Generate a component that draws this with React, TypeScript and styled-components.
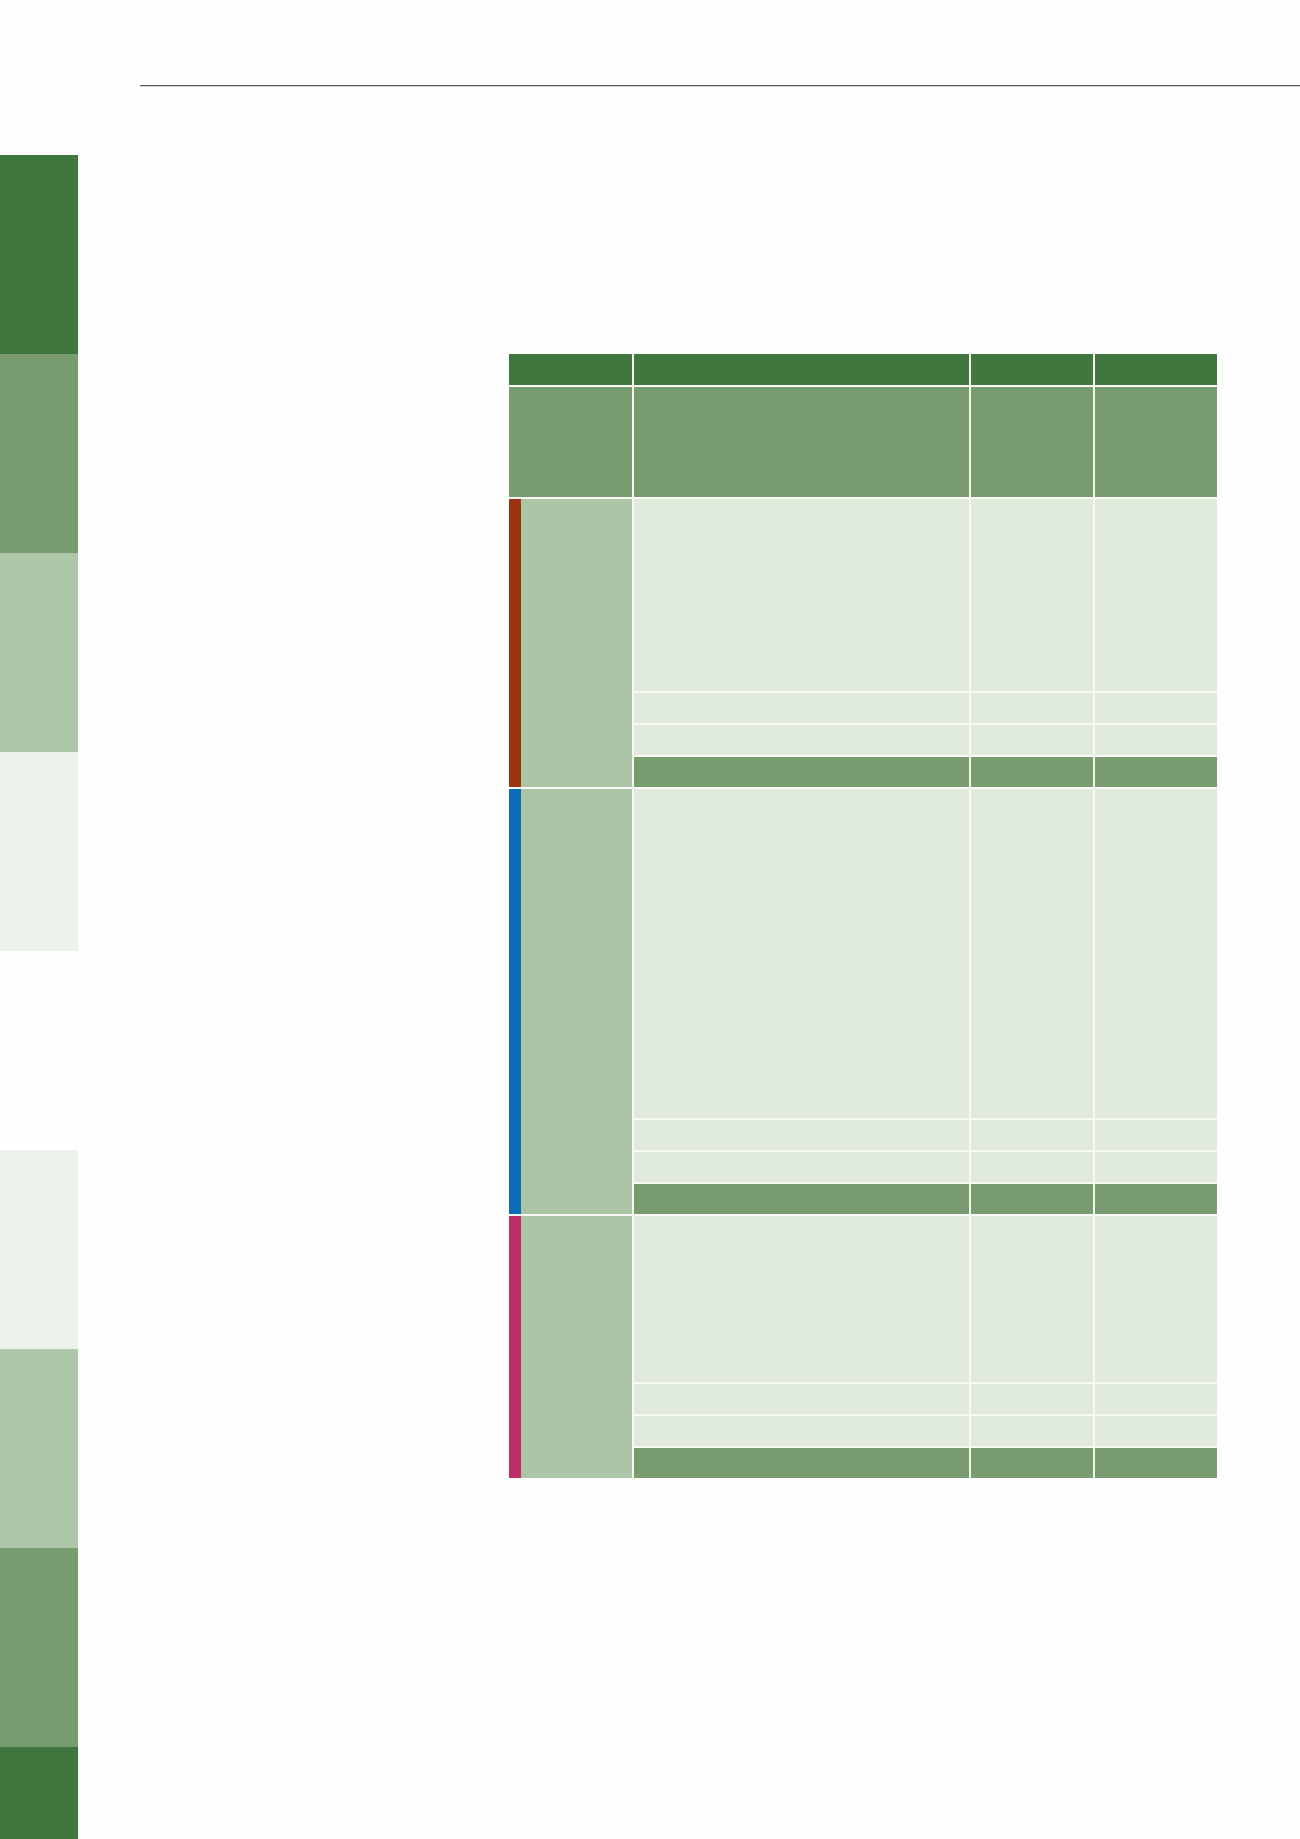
import React from 'react';
import styled, { createGlobalStyle } from 'styled-components';

const GlobalStyle = createGlobalStyle`
  html, body {
    margin: 0;
    padding: 0;
    background: #fefefe;
    font-family: "Liberation Sans", Arial, sans-serif;
  }
`;

const tones: Record<string, string> = {
  dark: '#42763f',
  mid: '#789c6f',
  light: '#aec7a8',
  pale: '#edf3ea',
  none: 'transparent',
};

const Page = styled.div`
  display: flex;
  flex-direction: column;
  width: 1300px;
  height: 1839px;
  overflow: hidden;
`;

const TopRule = styled.div`
  margin: 85px 0 0 140px;
  height: 1px;
  background: #5b5b52;
  box-shadow: 0 1px 0 #d2d2cb;
`;

const Body = styled.div`
  display: flex;
  margin-top: 69px;
`;

const Sidebar = styled.div`
  display: flex;
  flex-direction: column;
  width: 78px;
  flex-shrink: 0;
`;

const Tab = styled.div<{ $tone: string; $h: number }>`
  height: ${(p) => p.$h}px;
  background: ${(p) => tones[p.$tone]};
`;

const Content = styled.div`
  padding: 199px 0 0 431px;
`;

const Table = styled.div`
  display: flex;
  flex-direction: column;
  gap: 2px;
  width: 708px;
  background: #f8f8f5;
`;

const Row = styled.div<{ $h: number }>`
  display: grid;
  grid-template-columns: 123px 335px 122px 122px;
  gap: 2px;
  height: ${(p) => p.$h}px;
`;

const HeadCell = styled.div<{ $tone: string }>`
  background: ${(p) => tones[p.$tone]};
`;

const Section = styled.div<{ $big: number }>`
  display: grid;
  grid-template-columns: 123px 335px 122px 122px;
  grid-template-rows: ${(p) => p.$big}px 30px 30px 30px;
  gap: 2px;
`;

const GroupCell = styled.div<{ $bar: string }>`
  grid-row: 1 / -1;
  box-sizing: border-box;
  border-left: 12px solid ${(p) => p.$bar};
  background: #adc5a7;
`;

const Cell = styled.div<{ $total?: boolean }>`
  background: ${(p) => (p.$total ? '#789c6f' : '#e0eada')};
`;

const sections = [
  { bar: '#9a3312', big: 192 },
  { bar: '#0a6db6', big: 329 },
  { bar: '#be2e66', big: 166 },
];

const sideTabs = [
  { tone: 'dark', h: 199 },
  { tone: 'mid', h: 199 },
  { tone: 'light', h: 199 },
  { tone: 'pale', h: 199 },
  { tone: 'none', h: 199 },
  { tone: 'pale', h: 199 },
  { tone: 'light', h: 199 },
  { tone: 'mid', h: 199 },
  { tone: 'dark', h: 92 },
];

const App: React.FC = () => {
  return (
    <>
      <GlobalStyle />
      <Page>
        <TopRule />
        <Body>
          <Sidebar>
            {sideTabs.map((t, i) => (
              <Tab key={i} $tone={t.tone} $h={t.h} />
            ))}
          </Sidebar>
          <Content>
            <Table>
              <Row $h={31}>
                {[0, 1, 2, 3].map((i) => (
                  <HeadCell key={i} $tone="dark" />
                ))}
              </Row>
              <Row $h={110}>
                {[0, 1, 2, 3].map((i) => (
                  <HeadCell key={i} $tone="mid" />
                ))}
              </Row>
              {sections.map((s, i) => (
                <Section key={i} $big={s.big}>
                  <GroupCell $bar={s.bar} />
                  {[0, 1, 2, 3].map((r) =>
                    [0, 1, 2].map((c) => <Cell key={`${r}-${c}`} $total={r === 3} />)
                  )}
                </Section>
              ))}
            </Table>
          </Content>
        </Body>
      </Page>
    </>
  );
};

export default App;
